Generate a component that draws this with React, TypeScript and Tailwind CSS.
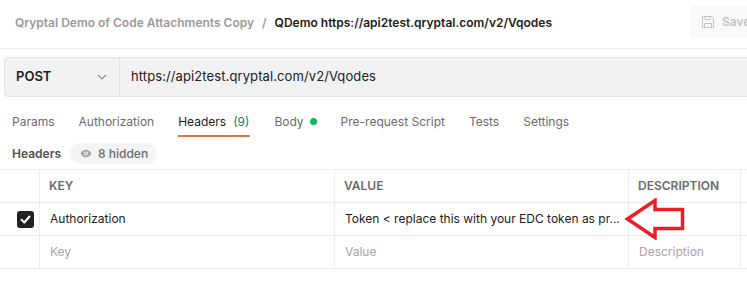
import React from "react";

const EyeIcon = () => (
  <svg width="12" height="9" viewBox="0 0 12 9" fill="none">
    <path d="M6 0.8C3.3 0.8 1.3 2.6 0.6 4.5 1.3 6.4 3.3 8.2 6 8.2s4.7-1.8 5.4-3.7C10.7 2.6 8.7 0.8 6 0.8z" fill="#a6a6a6" />
    <circle cx="6" cy="4.5" r="2" fill="#f4f4f4" />
    <circle cx="6" cy="4.5" r="1" fill="#a6a6a6" />
  </svg>
);

const SaveIcon = () => (
  <svg width="14" height="14" viewBox="0 0 14 14" fill="none" stroke="#c4c4c4" strokeWidth="1">
    <path d="M1.5 1.5h9l2 2v9h-11z" />
    <path d="M4 1.5v3h5v-3" />
    <path d="M3.5 12.5v-4h7v4" />
  </svg>
);

const Chevron = () => (
  <svg width="10" height="6" viewBox="0 0 10 6" fill="none" stroke="#8a8a8a" strokeWidth="1.1">
    <path d="M1 1l4 4 4-4" />
  </svg>
);

const Arrow = () => (
  <svg width="62" height="42" viewBox="0 0 62 42" className="absolute left-[624px] top-[198px]">
    <path d="M3.5 21 L31 2.5 V11.5 H58.5 V30.5 H31 V39.5 Z" fill="white" stroke="#ee1c25" strokeWidth="3.5" strokeLinejoin="miter" />
  </svg>
);

export default function App() {
  const tabs = [
    { label: "Params" },
    { label: "Authorization" },
    { label: "Headers", count: "(9)", active: true },
    { label: "Body", dot: true },
    { label: "Pre-request Script" },
    { label: "Tests" },
    { label: "Settings" },
  ];
  return (
    <div
      className="relative w-[747px] h-[308px] bg-white overflow-hidden text-[#212121]"
      style={{ fontFamily: "Inter, 'Open Sans', sans-serif" }}
    >
      {/* Top bar */}
      <div className="h-[49px] border-b border-[#ededed] flex items-center w-[780px]">
        <div className="pl-[15px] w-[690px] flex items-center text-[12px] font-semibold gap-[8px] pb-[2px]">
          <span className="text-[#9a9a9a]">Qryptal Demo of Code Attachments Copy</span>
          <span className="text-[#9a9a9a]">/</span>
          <span className="text-[#212121]">QDemo https://api2test.qryptal.com/v2/Vqodes</span>
        </div>
        <div className="h-[32px] w-[80px] mb-[4px] rounded-[4px] bg-[#f9f9f9] flex items-center gap-[7px] pl-[11px] text-[12px] font-semibold text-[#c4c4c4]">
          <SaveIcon />
          <span>Save</span>
        </div>
      </div>

      {/* URL bar */}
      <div className="mt-[8px] ml-[4px] h-[40px] flex border border-[#e3e3e3] rounded-l-[4px] bg-[#f2f2f2] w-[760px]">
        <div className="w-[115px] border-r border-[#e3e3e3] flex items-center justify-between pl-[11px] pr-[12px]">
          <span className="text-[13px] font-semibold text-[#212121]">POST</span>
          <Chevron />
        </div>
        <div className="flex items-center pl-[11px] text-[13px] text-[#212121] tracking-[0.1px]">
          https://api2test.qryptal.com/v2/Vqodes
        </div>
      </div>

      {/* Tabs */}
      <div className="mt-[8px] h-[32px] flex gap-[24px] pl-[12px] text-[12px] text-[#6b6b6b]">
        {tabs.map((t) => (
          <div
            key={t.label}
            className={`flex items-center h-full pt-[3px] border-b-[2px] ${t.count ? "gap-[7px]" : "gap-[6px]"} ${t.active ? "border-[#d9794a] text-[#212121] pr-[1px]" : "border-transparent"}`}
          >
            <span>{t.label}</span>
            {t.count && <span className="text-[#1d7a5c]">{t.count}</span>}
            {t.dot && <span className="w-[7px] h-[7px] rounded-full bg-[#0cbb52]" />}
          </div>
        ))}
      </div>

      {/* Headers label */}
      <div className="mt-[6px] h-[21px] flex items-center pl-[12px] gap-[9px]">
        <span className="text-[12px] font-semibold text-[#505050]">Headers</span>
        <div className="h-[21px] pl-[10px] pr-[9px] rounded-full bg-[#f4f4f4] flex items-center gap-[6px] text-[12px] font-medium text-[#6b6b6b]">
          <EyeIcon />
          <span>8 hidden</span>
        </div>
      </div>

      {/* Table */}
      <div className="mt-[5px] border-t border-[#ededed] text-[12px]">
        <div className="flex h-[33px] border-b border-[#ededed]">
          <div className="w-[40px] border-r border-[#ededed]" />
          <div className="w-[295px] border-r border-[#ededed] flex items-center pl-[9px] font-semibold text-[#6b6b6b]">KEY</div>
          <div className="w-[294px] border-r border-[#ededed] flex items-center pl-[9px] font-semibold text-[#6b6b6b]">VALUE</div>
          <div className="w-[112px] border-r border-[#ededed] flex items-center pl-[9px] font-semibold text-[#6b6b6b]">DESCRIPTION</div>
        </div>
        <div className="flex h-[33px] border-b border-[#ededed]">
          <div className="w-[40px] border-r border-[#ededed] flex items-center justify-end pr-[5px]">
            <div className="w-[17px] h-[17px] rounded-[3px] bg-[#212121] flex items-center justify-center">
              <svg width="11" height="9" viewBox="0 0 11 9" fill="none" stroke="white" strokeWidth="2" strokeLinecap="round" strokeLinejoin="round">
                <path d="M1.5 4.8l2.8 2.7 5.2-6" />
              </svg>
            </div>
          </div>
          <div className="w-[295px] border-r border-[#ededed] flex items-center pl-[10px] text-[#212121]">Authorization</div>
          <div className="w-[294px] border-r border-[#ededed] flex items-center pl-[10px] text-[#212121]">Token &lt; replace this with your EDC token as pr...</div>
          <div className="w-[112px] border-r border-[#ededed]" />
        </div>
        <div className="flex h-[33px] border-b border-[#ededed] text-[#a6a6a6]">
          <div className="w-[40px] border-r border-[#ededed]" />
          <div className="w-[295px] border-r border-[#ededed] flex items-center pl-[10px]">Key</div>
          <div className="w-[294px] border-r border-[#ededed] flex items-center pl-[10px]">Value</div>
          <div className="w-[112px] border-r border-[#ededed] flex items-center pl-[10px]">Description</div>
        </div>
      </div>

      <Arrow />
    </div>
  );
}
